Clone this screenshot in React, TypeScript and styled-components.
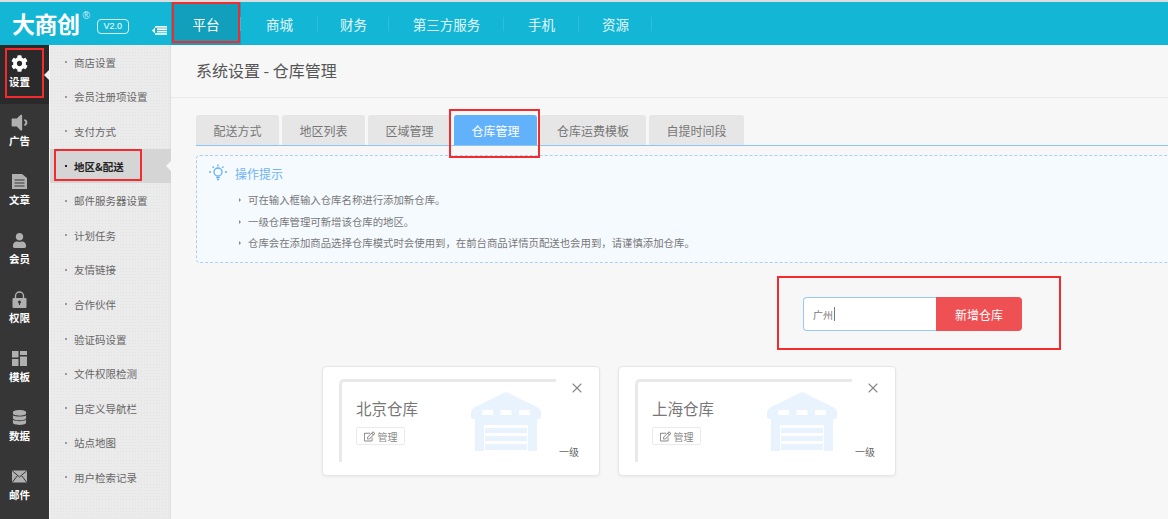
import React from 'react';
import styled, { createGlobalStyle } from 'styled-components';
import { FaCog, FaVolumeDown, FaUser, FaDatabase, FaRegEdit } from 'react-icons/fa';
import { X } from 'lucide-react';

const font = `"Noto Sans CJK SC", "Liberation Sans", sans-serif`;

const GlobalStyle = createGlobalStyle`
  html, body { margin: 0; padding: 0; height: 519px; overflow: hidden; background: #f7f7f7; }
  body { font-family: ${font}; }
  * { box-sizing: border-box; }
`;

const Page = styled.div`
  position: relative;
  width: 1168px;
  height: 519px;
  overflow: hidden;
  display: flex;
  flex-direction: column;
  border-top: 2px solid #dcdcdc;
`;

const TopBar = styled.header`
  height: 43px;
  background: #14b6d6;
  display: flex;
  flex-shrink: 0;
`;

const LogoArea = styled.div`
  width: 171px;
  padding-left: 12px;
  display: flex;
  align-items: center;
  color: #fff;
`;

const LogoText = styled.span`
  font-size: 23px;
  font-weight: 700;
  letter-spacing: -0.5px;
  line-height: 1;
`;

const Reg = styled.span`
  font-family: "Liberation Sans", sans-serif;
  font-size: 10px;
  line-height: 10px;
  align-self: flex-start;
  margin: 9px 0 0 3px;
  opacity: 0.8;
`;

const Version = styled.span`
  margin: 5px 0 0 7px;
  width: 32px;
  height: 15px;
  border: 1px solid #d6f3f9;
  border-radius: 4px;
  font-family: "Liberation Sans", sans-serif;
  font-size: 9px;
  line-height: 13px;
  text-align: center;
`;

const Toggle = styled.svg`
  margin: 13px 0 0 23px;
`;

const Nav = styled.nav`
  display: flex;
  align-items: stretch;
`;

const NavItem = styled.a<{ $active?: boolean; $w: number }>`
  width: ${p => p.$w}px;
  display: flex;
  align-items: center;
  justify-content: center;
  position: relative;
  font-size: 13.5px;
  color: ${p => (p.$active ? '#fff' : '#e2f6fa')};
  background: ${p => (p.$active ? '#119fbb' : 'transparent')};
  &::after {
    content: '';
    position: absolute;
    right: 0;
    top: 15px;
    height: 14px;
    width: 1px;
    background: #2bbfdc;
  }
`;

const Body = styled.div`
  flex: 1;
  display: flex;
  min-height: 0;
`;

const IconRail = styled.aside`
  width: 49px;
  background: #363636;
  flex-shrink: 0;
`;

const RailItem = styled.a<{ $active?: boolean }>`
  height: 59px;
  display: flex;
  flex-direction: column;
  align-items: center;
  padding: 8px 10px 0 0;
  gap: 2px;
  position: relative;
  color: #fff;
  font-size: 10.5px;
  font-weight: 700;
  line-height: 14px;
  background: ${p => (p.$active ? '#2a2a2a' : 'transparent')};
  svg { color: ${p => (p.$active ? '#fff' : '#b0b0b0')}; }
  ${p =>
    p.$active &&
    `&::after {
      content: '';
      position: absolute;
      right: 0;
      top: 25px;
      border: 5px solid transparent;
      border-right-color: #f0f0f0;
      border-left-width: 0;
    }`}
`;

const IconBox = styled.span`
  height: 20px;
  display: flex;
  align-items: center;
  justify-content: center;
`;

const SubMenu = styled.aside`
  width: 121px;
  margin-left: 1px;
  padding-top: 0;
  background-color: #ebebeb;
  background-image: radial-gradient(#e2e2e2 0.6px, transparent 0.7px);
  background-size: 3px 3px;
  flex-shrink: 0;
  box-shadow: inset -2px 0 2px -1px #dcdcdc;
`;

const SubItem = styled.a<{ $active?: boolean }>`
  height: 34.6px;
  display: flex;
  align-items: center;
  padding-left: 24px;
  position: relative;
  font-size: 10.5px;
  color: ${p => (p.$active ? '#222' : '#666')};
  font-weight: ${p => (p.$active ? 700 : 400)};
  background: ${p => (p.$active ? '#d5d5d5' : 'transparent')};
  &::before {
    content: '';
    position: absolute;
    left: 15px;
    top: 50%;
    width: 2px;
    height: 2px;
    margin-top: -1px;
    background: ${p => (p.$active ? '#222' : '#999')};
  }
  ${p =>
    p.$active &&
    `&::after {
      content: '';
      position: absolute;
      right: 0;
      top: 12px;
      border: 5px solid transparent;
      border-right-color: #f7f7f7;
      border-left-width: 0;
    }`}
`;

const Main = styled.main`
  flex: 1;
  min-width: 0;
  background: #f7f7f7;
`;

const TitleBar = styled.div`
  height: 53px;
  padding: 0 0 2px 25px;
  display: flex;
  align-items: center;
  border-bottom: 1px solid #eaeaea;
  font-size: 16px;
  color: #555;
`;

const Content = styled.div`
  padding: 17px 0 0 25px;
`;

const Tabs = styled.div`
  display: flex;
  gap: 3px;
  height: 31px;
  width: 1100px;
  border-bottom: 1px solid #8cc4f2;
`;

const Tab = styled.a<{ $active?: boolean; $w: number }>`
  width: ${p => p.$w}px;
  height: 30px;
  display: flex;
  align-items: center;
  justify-content: center;
  border-radius: 3px 3px 0 0;
  font-size: 12px;
  color: ${p => (p.$active ? '#fff' : '#777')};
  background: ${p => (p.$active ? '#62b1fb' : '#e6e6e6')};
`;

const TipBox = styled.section`
  margin-top: 9px;
  width: 1100px;
  height: 108px;
  border: 1px dashed #a9d0f2;
  border-radius: 4px;
  background: #f5faff;
  padding: 8px 0 0 12px;
`;

const TipHead = styled.div`
  display: flex;
  align-items: center;
  gap: 8px;
  font-size: 12px;
  color: #6db3f5;
  height: 18px;
`;

const TipList = styled.ul`
  list-style: none;
  margin: 7px 0 0;
  padding: 0 0 0 39px;
`;

const TipRow = styled.li`
  position: relative;
  height: 21.5px;
  display: flex;
  align-items: center;
  font-size: 10.4px;
  color: #777;
  &::before {
    content: '';
    position: absolute;
    left: -9px;
    top: 9px;
    border: 2px solid transparent;
    border-left-color: #888;
    border-right-width: 0;
  }
`;

const AddRow = styled.div`
  display: flex;
  margin: 34px 0 0 607px;
`;

const NameInput = styled.div`
  width: 133px;
  height: 34px;
  border: 1px solid #97c9f5;
  border-right: 0;
  border-radius: 4px 0 0 4px;
  background: #fff;
  padding-left: 9px;
  display: flex;
  align-items: center;
  font-size: 10px;
  color: #777;
  &::after {
    content: '';
    width: 1px;
    height: 14px;
    margin-left: 1px;
    background: #777;
  }
`;

const AddButton = styled.button`
  width: 86px;
  height: 34px;
  border: 0;
  border-radius: 0 4px 4px 0;
  background: #ee5053;
  color: #fff;
  font-family: ${font};
  font-size: 12px;
  padding: 0;
`;

const Cards = styled.div`
  display: flex;
  gap: 18px;
  margin: 35px 0 0 126px;
`;

const Card = styled.article`
  position: relative;
  width: 278px;
  height: 110px;
  background: #fff;
  border: 1px solid #e6e6e6;
  border-radius: 4px;
  padding: 12px 0 0 16px;
  box-shadow: 0 1px 3px rgba(0, 0, 0, 0.06);
`;

const CardInner = styled.div`
  position: relative;
  width: 217px;
  height: 83px;
  border-top: 3px solid #e9e9e9;
  border-left: 3px solid #e9e9e9;
  border-top-left-radius: 5px;
  padding: 15px 0 0 14px;
`;

const CardTitle = styled.div`
  font-size: 15.5px;
  line-height: 22px;
  color: #777;
`;

const ManageTag = styled.a`
  margin-top: 8px;
  width: 49px;
  height: 18px;
  display: flex;
  align-items: center;
  justify-content: center;
  gap: 3px;
  border: 1px solid #eaeaea;
  border-radius: 2px;
  font-size: 10px;
  color: #888;
`;

const HouseIcon = styled.svg`
  position: absolute;
  left: 129px;
  top: 10px;
`;

const CloseIcon = styled(X)`
  position: absolute;
  right: 14px;
  top: 13px;
  color: #888;
`;

const Level = styled.span`
  position: absolute;
  right: 20px;
  bottom: 16px;
  font-size: 10px;
  line-height: 14px;
  color: #666;
`;

const Mark = styled.div<{ $x: number; $y: number; $w: number; $h: number }>`
  position: absolute;
  left: ${p => p.$x}px;
  top: ${p => p.$y - 2}px;
  width: ${p => p.$w}px;
  height: ${p => p.$h}px;
  border: 2px solid #f42b2e;
  pointer-events: none;
`;

const TemplateIcon = () => (
  <svg width="15" height="15" viewBox="0 0 15 15" fill="currentColor">
    <rect x="0" y="0" width="6.5" height="6.5" />
    <rect x="8" y="0" width="7" height="4" />
    <rect x="0" y="8" width="6.5" height="7" />
    <rect x="8" y="5.5" width="7" height="9.5" />
  </svg>
);

const ArticleIcon = () => (
  <svg width="15" height="15" viewBox="0 0 15 15">
    <path d="M0 0h10l5 4v11H0z" fill="currentColor" />
    <path d="M2.5 6h10M2.5 9h10M2.5 12h10" stroke="#363636" strokeWidth="1.2" />
  </svg>
);

const LockIcon = () => (
  <svg width="15" height="17" viewBox="0 0 15 17">
    <path d="M3.5 7.5V5a4 4 0 0 1 8 0v2.5" fill="none" stroke="currentColor" strokeWidth="1.4" />
    <rect x="0.5" y="7" width="14" height="10" rx="1" fill="currentColor" />
    <circle cx="7.5" cy="11" r="1.5" fill="#363636" />
    <rect x="7" y="11" width="1" height="3" fill="#363636" />
  </svg>
);

const MailIcon = () => (
  <svg width="15" height="13" viewBox="0 0 15 13">
    <rect x="0" y="0.5" width="15" height="12" rx="1" fill="currentColor" />
    <path d="M0.5 1 7.5 7 14.5 1M0.5 12 5.5 5.5M14.5 12 9.5 5.5" fill="none" stroke="#363636" strokeWidth="1" />
  </svg>
);

const BulbIcon = () => (
  <svg width="18" height="18" viewBox="0 0 18 18" fill="none" stroke="#62b1fb" strokeWidth="1.3">
    <circle cx="9" cy="8" r="4" />
    <path d="M7.2 13.5h3.6M8 15.5h2M9 0.5v2M2 8h-2M18 8h-2M3.5 2.5l1.4 1.4M14.5 2.5l-1.4 1.4" />
  </svg>
);

const Warehouse = () => (
  <HouseIcon width="70" height="59" viewBox="0 0 70 59" fill="#e9f3fd">
    <path d="M35 0 L66 15 Q70 17 70 21 V25 Q70 27 67 27 H66 V59 H57 V33 H13 V59 H4 V27 H3 Q0 27 0 25 V21 Q0 17 4 15 Z" />
    <rect x="14" y="36" width="42" height="5" />
    <rect x="14" y="44" width="42" height="5" />
    <rect x="14" y="52" width="42" height="6" />
    <g fill="#fff">
      <rect x="11" y="18" width="11" height="5" />
      <rect x="29.5" y="18" width="11" height="5" />
      <rect x="48" y="18" width="11" height="5" />
    </g>
  </HouseIcon>
);

const railItems: { label: string; icon: React.ReactNode; active?: boolean }[] = [
  { label: '设置', icon: <FaCog size={17} />, active: true },
  { label: '广告', icon: <FaVolumeDown size={21} /> },
  { label: '文章', icon: <ArticleIcon /> },
  { label: '会员', icon: <FaUser size={15} /> },
  { label: '权限', icon: <LockIcon /> },
  { label: '模板', icon: <TemplateIcon /> },
  { label: '数据', icon: <FaDatabase size={15} /> },
  { label: '邮件', icon: <MailIcon /> },
];

const subItems = ['商店设置', '会员注册项设置', '支付方式', '地区&配送', '邮件服务器设置', '计划任务', '友情链接', '合作伙伴', '验证码设置', '文件权限检测', '自定义导航栏', '站点地图', '用户检索记录'];

const navItems = [
  { label: '平台', w: 70, active: true },
  { label: '商城', w: 77 },
  { label: '财务', w: 71 },
  { label: '第三方服务', w: 115 },
  { label: '手机', w: 75 },
  { label: '资源', w: 73 },
];

const tabs = [
  { label: '配送方式', w: 83 },
  { label: '地区列表', w: 83 },
  { label: '区域管理', w: 83 },
  { label: '仓库管理', w: 83, active: true },
  { label: '仓库运费模板', w: 106 },
  { label: '自提时间段', w: 95 },
];

const tips = [
  '可在输入框输入仓库名称进行添加新仓库。',
  '一级仓库管理可新增该仓库的地区。',
  '仓库会在添加商品选择仓库模式时会使用到，在前台商品详情页配送也会用到，请谨慎添加仓库。',
];

const App: React.FC = () => {
  return (
    <Page>
      <GlobalStyle />
      <TopBar>
        <LogoArea>
          <LogoText>大商创</LogoText>
          <Reg>®</Reg>
          <Version>V2.0</Version>
          <Toggle width="15" height="9" viewBox="0 0 15 9" fill="#fff">
            <path d="M0 4.5 3 1.5V7.5Z" />
            <rect x="3" y="0" width="12" height="1.6" />
            <rect x="5" y="2.4" width="10" height="1.6" />
            <rect x="5" y="4.8" width="10" height="1.6" />
            <rect x="3" y="7.2" width="12" height="1.6" />
          </Toggle>
        </LogoArea>
        <Nav>
          {navItems.map(n => (
            <NavItem key={n.label} $w={n.w} $active={n.active}>{n.label}</NavItem>
          ))}
        </Nav>
      </TopBar>
      <Body>
        <IconRail>
          {railItems.map(r => (
            <RailItem key={r.label} $active={r.active}>
              <IconBox>{r.icon}</IconBox>
              {r.label}
            </RailItem>
          ))}
        </IconRail>
        <SubMenu>
          {subItems.map(s => (
            <SubItem key={s} $active={s === '地区&配送'}>{s}</SubItem>
          ))}
        </SubMenu>
        <Main>
          <TitleBar>系统设置 - 仓库管理</TitleBar>
          <Content>
            <Tabs>
              {tabs.map(t => (
                <Tab key={t.label} $w={t.w} $active={t.active}>{t.label}</Tab>
              ))}
            </Tabs>
            <TipBox>
              <TipHead><BulbIcon />操作提示</TipHead>
              <TipList>
                {tips.map(t => <TipRow key={t}>{t}</TipRow>)}
              </TipList>
            </TipBox>
            <AddRow>
              <NameInput>广州</NameInput>
              <AddButton>新增仓库</AddButton>
            </AddRow>
            <Cards>
              {['北京仓库', '上海仓库'].map(name => (
                <Card key={name}>
                  <CardInner>
                    <CardTitle>{name}</CardTitle>
                    <ManageTag><FaRegEdit size={11} />管理</ManageTag>
                    <Warehouse />
                  </CardInner>
                  <CloseIcon size={16} strokeWidth={1.6} />
                  <Level>一级</Level>
                </Card>
              ))}
            </Cards>
          </Content>
        </Main>
      </Body>
      <Mark $x={172} $y={2} $w={68} $h={41} />
      <Mark $x={5} $y={48} $w={39} $h={50} />
      <Mark $x={54} $y={149} $w={88} $h={32} />
      <Mark $x={449} $y={109} $w={91} $h={49} />
      <Mark $x={777} $y={276} $w={284} $h={74} />
    </Page>
  );
};

export default App;
